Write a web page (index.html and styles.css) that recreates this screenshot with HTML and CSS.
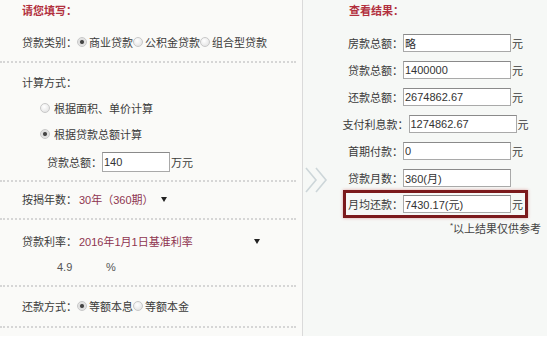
FILE: index.html
```html
<!DOCTYPE html>
<html lang="zh-CN">
<head>
    <meta charset="UTF-8">
    <meta name="viewport" content="width=device-width, initial-scale=1.0">
    <title>房贷计算器</title>
    <link rel="stylesheet" href="styles.css">
</head>
<body>
    <div class="page">
        <!-- 左侧：输入 -->
        <div class="left">
            <div class="sec sec-type">
                <div class="title">请您填写：</div>
                <div class="row">
                    <span class="lbl">贷款类别：</span>
                    <span class="radio on"></span><span>商业贷款</span>
                    <span class="radio"></span><span>公积金贷款</span>
                    <span class="radio"></span><span>组合型贷款</span>
                </div>
            </div>

            <div class="sec sec-calc">
                <div class="row">计算方式：</div>
                <div class="row sub"><span class="radio"></span><span>根据面积、单价计算</span></div>
                <div class="row sub"><span class="radio on"></span><span>根据贷款总额计算</span></div>
                <div class="row amount">
                    <span class="lbl">贷款总额：</span>
                    <input class="field small" value="140" readonly>
                    <span>万元</span>
                </div>
            </div>

            <div class="sec sec-years">
                <div class="row">
                    <span class="lbl">按揭年数：</span>
                    <span class="select years">30年（360期）<span class="arrow"></span></span>
                </div>
            </div>

            <div class="sec sec-rate">
                <div class="row">
                    <span class="lbl">贷款利率：</span>
                    <span class="select rate">2016年1月1日基准利率<span class="arrow"></span></span>
                </div>
                <div class="row pct">
                    <span class="pct-val">4.9</span>
                    <span>%</span>
                </div>
            </div>

            <div class="sec sec-way">
                <div class="row">
                    <span class="lbl">还款方式：</span>
                    <span class="radio on"></span><span>等额本息</span>
                    <span class="radio"></span><span>等额本金</span>
                </div>
            </div>
        </div>

        <!-- 右侧：结果 -->
        <div class="right">
            <svg class="chevron" width="26" height="26" viewBox="0 0 26 26">
                <polyline points="2,1 12,13 2,25" fill="none" stroke="#cdd6d9" stroke-width="1.6"/>
                <polyline points="12,1 22,13 12,25" fill="none" stroke="#cdd6d9" stroke-width="1.6"/>
            </svg>

            <div class="r-title">查看结果：</div>
            <div class="results">
                <div class="res-row"><span class="lbl">房款总额：</span><input class="field" value="略" readonly><span class="unit">元</span></div>
                <div class="res-row"><span class="lbl">贷款总额：</span><input class="field" value="1400000" readonly><span class="unit">元</span></div>
                <div class="res-row"><span class="lbl">还款总额：</span><input class="field" value="2674862.67" readonly><span class="unit">元</span></div>
                <div class="res-row"><span class="lbl">支付利息款：</span><input class="field" value="1274862.67" readonly><span class="unit">元</span></div>
                <div class="res-row"><span class="lbl">首期付款：</span><input class="field" value="0" readonly><span class="unit">元</span></div>
                <div class="res-row"><span class="lbl">贷款月数：</span><input class="field" value="360(月)" readonly><span class="unit"></span></div>
                <div class="res-row hl"><span class="lbl">月均还款：</span><input class="field" value="7430.17(元)" readonly><span class="unit">元</span></div>
            </div>
            <div class="note"><span class="star">*</span>以上结果仅供参考</div>
        </div>
    </div>
</body>
</html>
```

FILE: styles.css
```css
body {
    margin: 0;
    font-family: "Liberation Sans", "Noto Sans CJK SC", sans-serif;
    font-size: 11px;
    color: #3a3a3a;
    background: #fff;
}

.page {
    display: flex;
    height: 336px;
}

/* left column */
.left {
    width: 296px;
    padding-right: 6px;
    border-right: 1px solid #dadada;
    background: #fafaf8;
}

.sec {
    border-bottom: 2px dotted #d6d6d6;
}

.title,
.r-title {
    height: 22px;
    line-height: 22px;
    font-weight: bold;
    color: #b2303e;
}

.title {
    padding-left: 22px;
}

.row {
    display: flex;
    align-items: center;
    height: 26px;
    padding-left: 22px;
    white-space: nowrap;
}

.sec-type .row {
    margin-top: 7px;
}

.sec-type {
    padding-bottom: 6px;
}

.sec-calc {
    padding: 6px 0 3px;
}

.row.sub {
    padding-left: 40px;
}

.row.amount {
    height: 30px;
    padding-left: 47px;
}

.sec-years {
    padding: 4px 0 6px;
}

.sec-rate {
    padding: 8px 0 5px;
}

.sec-way {
    padding: 6px 0 7px;
}

.lbl {
    margin-right: 0;
}

.radio {
    width: 10px;
    height: 10px;
    margin: 0 2px 0 0;
    border: 1px solid #c8c8c8;
    border-radius: 50%;
    box-sizing: border-box;
    background: radial-gradient(circle at 40% 35%, #fff, #dedede);
    flex: none;
}

.radio.on {
    background: radial-gradient(circle, #444 0 1.5px, #dcdcdc 2.5px, #f2f2f2);
}

.sub .radio {
    margin-right: 4px;
}

.field {
    width: 108px;
    height: 18px;
    box-sizing: border-box;
    margin: 0;
    padding: 0 1px;
    border: 1px solid #a9a9a9;
    border-top-color: #8a8a8a;
    background: #fff;
    font: inherit;
    color: #333;
    outline: none;
}

.field.small {
    width: 68px;
    height: 20px;
    margin-right: 1px;
}

.select {
    display: flex;
    align-items: center;
    justify-content: space-between;
    margin-left: 2px;
    color: #8f3550;
}

.select.years {
    width: 88px;
}

.select.rate {
    width: 181px;
}

.arrow {
    width: 0;
    height: 0;
    border-left: 3px solid transparent;
    border-right: 3px solid transparent;
    border-top: 5px solid #222;
}

.row.pct {
    padding-left: 57px;
    color: #555;
}

.pct-val {
    width: 49px;
}

/* right column */
.right {
    flex: 1;
    position: relative;
    padding-left: 21px;
    background: #f6f8f6;
}

.chevron {
    position: absolute;
    left: 1px;
    top: 167px;
}

.r-title {
    padding-left: 25px;
}

.results {
    margin-top: 7px;
}

.res-row {
    display: flex;
    justify-content: center;
    align-items: center;
    height: 27px;
    white-space: nowrap;
}

.unit {
    width: 11px;
    padding-left: 1px;
}

.res-row.hl {
    width: 185px;
    height: 28px;
    box-sizing: border-box;
    margin: -1px auto 0;
    border: 3px solid #7b1a1c;
    box-shadow: 0 0 3px rgba(190, 60, 60, 0.45);
}

.note {
    height: 20px;
    line-height: 20px;
    margin-top: 1px;
    padding-right: 6px;
    text-align: right;
    color: #444;
}

.star {
    font-size: 8px;
    vertical-align: top;
    line-height: 14px;
}
```
